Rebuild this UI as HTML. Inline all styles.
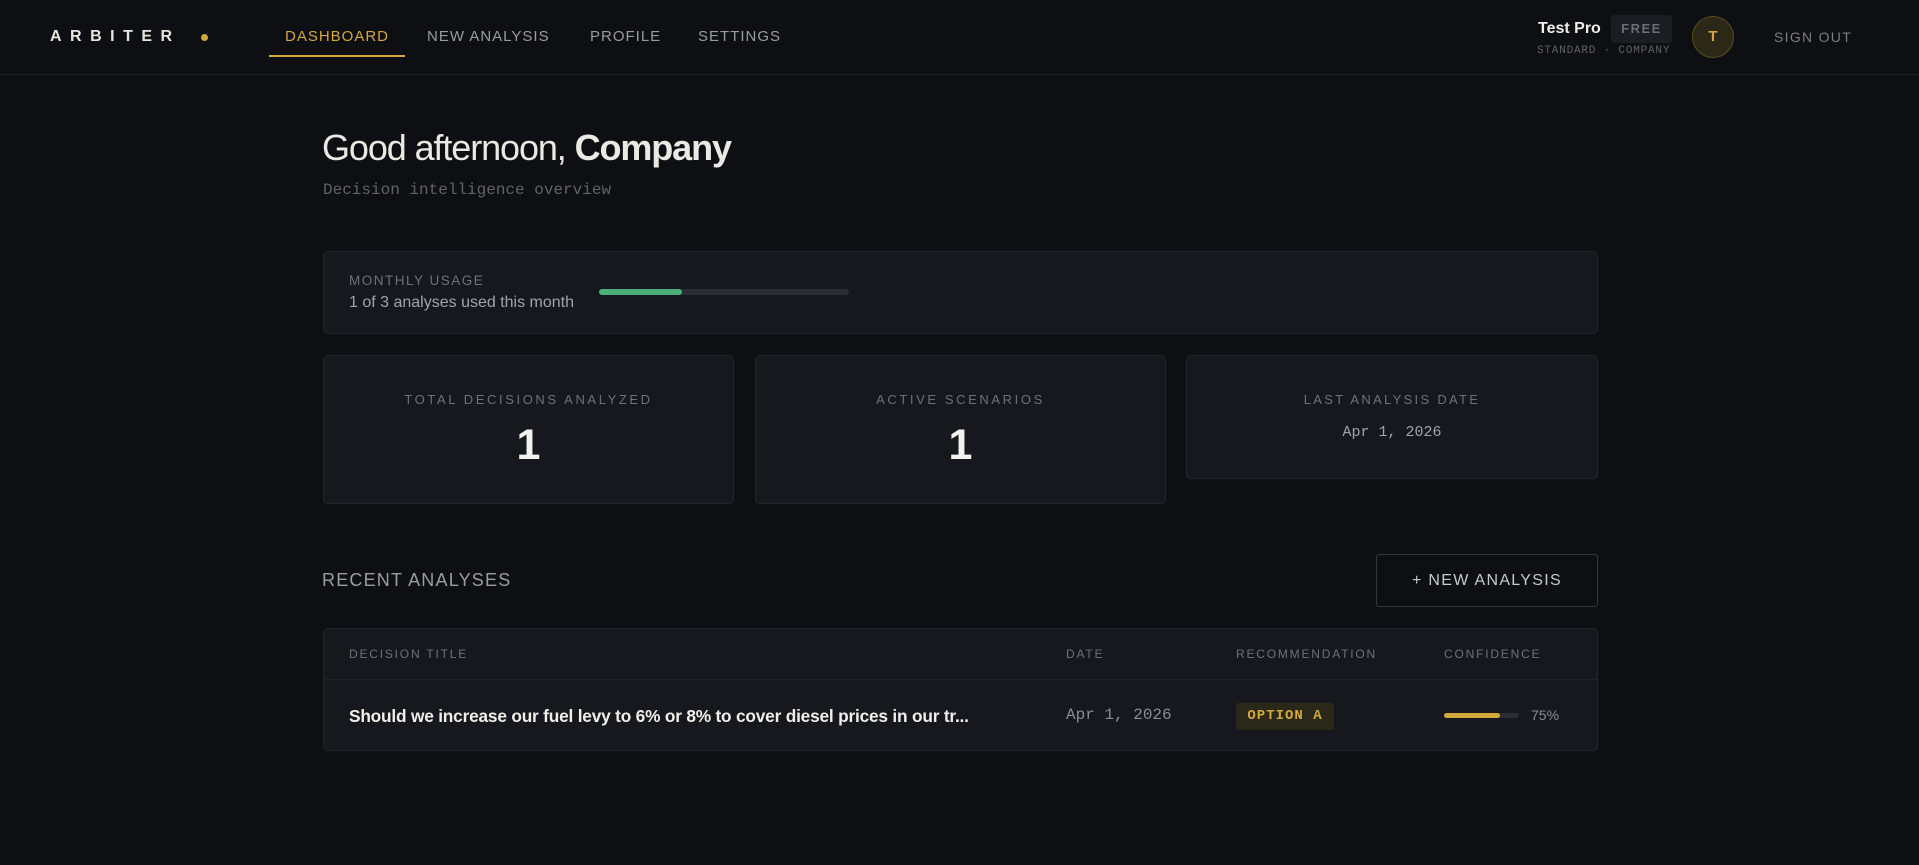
<!DOCTYPE html>
<html><head><meta charset="utf-8"><style>
*{box-sizing:border-box;margin:0;padding:0}
body{width:1919px;height:865px;background:#0e0f12;color:#e8e6e1;font-family:"Liberation Sans",sans-serif;position:relative;overflow:hidden}
.a{position:absolute;white-space:nowrap}
.mono{font-family:"Liberation Mono",monospace}
.hdr{position:absolute;left:0;top:0;width:1919px;height:75px;border-bottom:1px solid #1f2127}
.nav{font-size:15px;letter-spacing:1px;color:#9a9ca3;top:28px}
.card{position:absolute;background:#16181e;border:1px solid #23262d;border-radius:5px}
.lbl{font-size:13px;letter-spacing:2px;color:#6e7179}
</style></head><body>
<div class="hdr"></div>
<div class="a" style="left:50px;top:28px;font-size:16px;font-weight:bold;letter-spacing:8.5px;color:#e8e6e1">ARBITER</div>
<div class="a" style="left:201px;top:34px;width:7px;height:7px;border-radius:50%;background:#d4a93c"></div>
<div class="a nav" style="left:285px;color:#d4a93c">DASHBOARD</div>
<div class="a" style="left:269px;top:55px;width:136px;height:2px;background:#d4a93c"></div>
<div class="a nav" style="left:427px">NEW ANALYSIS</div>
<div class="a nav" style="left:590px">PROFILE</div>
<div class="a nav" style="left:698px">SETTINGS</div>
<div class="a" style="left:1538px;top:20px;font-size:16px;font-weight:bold;color:#f0eee9">Test Pro</div>
<div class="a" style="left:1611px;top:15px;width:61px;height:28px;background:#1b1d22;border-radius:3px;color:#6b6e75;font-size:13px;font-weight:bold;letter-spacing:1.5px;text-align:center;line-height:28px">FREE</div>
<div class="a mono" style="left:1537px;top:45px;font-size:11px;color:#5f6269;letter-spacing:0.8px">STANDARD · COMPANY</div>
<div class="a" style="left:1692px;top:16px;width:42px;height:42px;border-radius:50%;background:#2b2818;border:1px solid #5a4a1e;color:#d4a93c;font-size:15px;font-weight:bold;text-align:center;line-height:40px">T</div>
<div class="a" style="left:1774px;top:29px;font-size:14px;letter-spacing:1.3px;color:#7a7d84">SIGN OUT</div>

<div class="a" style="left:322px;top:127px;font-size:36px;letter-spacing:-1.1px;color:#ebe9e4">Good afternoon, <b>Company</b></div>
<div class="a mono" style="left:323px;top:181px;font-size:16px;color:#5f6269">Decision intelligence overview</div>

<div class="card" style="left:323px;top:251px;width:1275px;height:83px"></div>
<div class="a lbl" style="left:349px;top:273px;font-size:13.5px;letter-spacing:1.5px">MONTHLY USAGE</div>
<div class="a" style="left:349px;top:294px;font-size:16px;color:#a2a4aa">1 of 3 analyses used this month</div>
<div class="a" style="left:599px;top:289px;width:250px;height:6px;border-radius:3px;background:#2a2d34"><div style="width:83px;height:6px;border-radius:3px;background:#4caf7a"></div></div>

<div class="card" style="left:323px;top:355px;width:411px;height:149px"></div>
<div class="card" style="left:755px;top:355px;width:411px;height:149px"></div>
<div class="card" style="left:1186px;top:355px;width:412px;height:124px"></div>
<div class="a lbl" style="left:323px;width:411px;text-align:center;top:392px;letter-spacing:2.6px">TOTAL DECISIONS ANALYZED</div>
<div class="a lbl" style="left:755px;width:411px;text-align:center;top:392px;letter-spacing:2.6px">ACTIVE SCENARIOS</div>
<div class="a lbl" style="left:1186px;width:412px;text-align:center;top:392px;letter-spacing:2.3px">LAST ANALYSIS DATE</div>
<div class="a" style="left:323px;width:411px;text-align:center;top:421px;font-size:43px;font-weight:bold;color:#f4f2ee">1</div>
<div class="a" style="left:755px;width:411px;text-align:center;top:421px;font-size:43px;font-weight:bold;color:#f4f2ee">1</div>
<div class="a mono" style="left:1186px;width:412px;text-align:center;top:424px;font-size:15px;color:#a2a4aa">Apr 1, 2026</div>

<div class="a" style="left:322px;top:570px;font-size:18px;letter-spacing:1.2px;color:#9a9ca3">RECENT ANALYSES</div>
<div class="a" style="left:1376px;top:554px;width:222px;height:53px;border:1px solid #34373e;border-radius:3px;text-align:center;line-height:51px;font-size:16px;letter-spacing:1.3px;color:#c8c8c8">+ NEW ANALYSIS</div>

<div class="card" style="left:323px;top:628px;width:1275px;height:123px"></div>
<div class="a" style="left:324px;top:679px;width:1273px;height:1px;background:#202329"></div>
<div class="a lbl" style="left:349px;top:647px;font-size:12px;letter-spacing:1.8px">DECISION TITLE</div>
<div class="a lbl" style="left:1066px;top:647px;font-size:12px;letter-spacing:1.8px">DATE</div>
<div class="a lbl" style="left:1236px;top:647px;font-size:12px;letter-spacing:1.8px">RECOMMENDATION</div>
<div class="a lbl" style="left:1444px;top:647px;font-size:12px;letter-spacing:1.8px">CONFIDENCE</div>
<div class="a" style="left:349px;top:706px;font-size:17.3px;font-weight:bold;letter-spacing:-0.2px;color:#f0eee9">Should we increase our fuel levy to 6% or 8% to cover diesel prices in our tr...</div>
<div class="a mono" style="left:1066px;top:706px;font-size:16px;color:#8a8c92">Apr 1, 2026</div>
<div class="a mono" style="left:1236px;top:703px;width:98px;height:27px;background:#2a2818;border-radius:3px;color:#d4a93c;font-size:14px;font-weight:bold;letter-spacing:1px;text-align:center;line-height:27px">OPTION A</div>
<div class="a" style="left:1444px;top:713px;width:75px;height:5px;border-radius:3px;background:#2a2d34"><div style="width:56px;height:5px;border-radius:3px;background:#d4a93c"></div></div>
<div class="a" style="left:1531px;top:707px;font-size:14px;color:#8a8c92">75%</div>
</body></html>
